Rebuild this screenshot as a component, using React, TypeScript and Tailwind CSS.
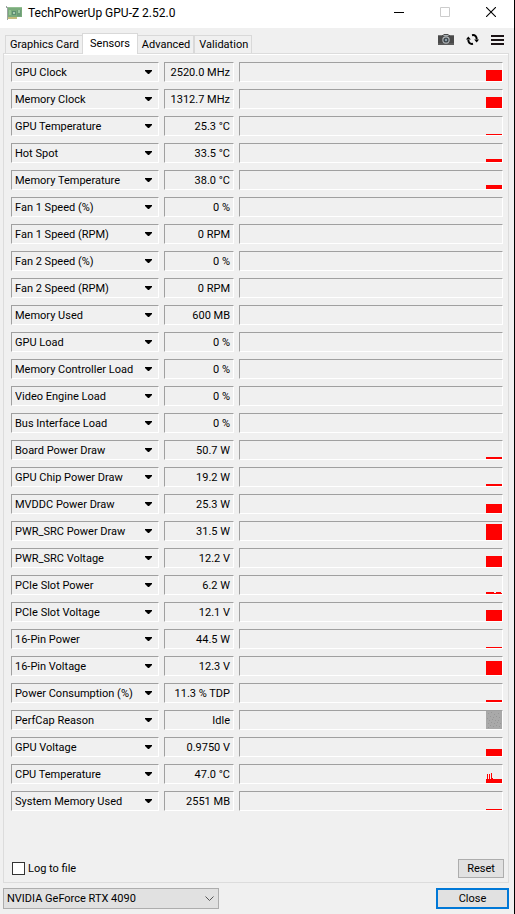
import { useState } from 'react';
import clsx from 'clsx';

type Sensor = {
  name: string;
  value: string;
  /** Height of the recorded bar in pixels, 0 when nothing was recorded */
  level?: number;
  kind?: 'bar' | 'slot' | 'spikes' | 'perfcap';
};

const SENSORS: Sensor[] = [
  { name: 'GPU Clock', value: '2520.0 MHz', level: 11 },
  { name: 'Memory Clock', value: '1312.7 MHz', level: 11 },
  { name: 'GPU Temperature', value: '25.3 °C', level: 1 },
  { name: 'Hot Spot', value: '33.5 °C', level: 3 },
  { name: 'Memory Temperature', value: '38.0 °C', level: 4 },
  { name: 'Fan 1 Speed (%)', value: '0 %' },
  { name: 'Fan 1 Speed (RPM)', value: '0 RPM' },
  { name: 'Fan 2 Speed (%)', value: '0 %' },
  { name: 'Fan 2 Speed (RPM)', value: '0 RPM' },
  { name: 'Memory Used', value: '600 MB' },
  { name: 'GPU Load', value: '0 %' },
  { name: 'Memory Controller Load', value: '0 %' },
  { name: 'Video Engine Load', value: '0 %' },
  { name: 'Bus Interface Load', value: '0 %' },
  { name: 'Board Power Draw', value: '50.7 W', level: 2 },
  { name: 'GPU Chip Power Draw', value: '19.2 W', level: 2 },
  { name: 'MVDDC Power Draw', value: '25.3 W', level: 9 },
  { name: 'PWR_SRC Power Draw', value: '31.5 W', level: 16 },
  { name: 'PWR_SRC Voltage', value: '12.2 V', level: 11 },
  { name: 'PCIe Slot Power', value: '6.2 W', level: 1, kind: 'slot' },
  { name: 'PCIe Slot Voltage', value: '12.1 V', level: 11 },
  { name: '16-Pin Power', value: '44.5 W', level: 1 },
  { name: '16-Pin Voltage', value: '12.3 V', level: 14 },
  { name: 'Power Consumption (%)', value: '11.3 % TDP', level: 2 },
  { name: 'PerfCap Reason', value: 'Idle', level: 18, kind: 'perfcap' },
  { name: 'GPU Voltage', value: '0.9750 V', level: 7 },
  { name: 'CPU Temperature', value: '47.0 °C', level: 4, kind: 'spikes' },
  { name: 'System Memory Used', value: '2551 MB', level: 1 },
];

const TABS = ['Graphics Card', 'Sensors', 'Advanced', 'Validation'];

const SUNKEN = 'h-5 border border-t-[#a0a0a0] border-l-[#a0a0a0] border-r-white border-b-white';

function CardIcon() {
  return (
    <svg width="16" height="15" viewBox="0 0 16 15" aria-hidden="true">
      <path d="M0 0h1v1h1v13H1V2H0z" fill="#9aa3a0" />
      <path d="M2 1h14v10H2z" fill="#7aab7c" />
      <path d="M2 1h14v1H2z" fill="#93bf92" />
      <path d="M2 11h9v2H2z" fill="#c3bd7c" />
      <path d="M3 4h2v5H3z" fill="#93c292" />
      <path d="M6 5h4v4H6z" fill="#5e8f73" />
      <path d="M7 6h2v2H7z" fill="#a9cbb0" />
      <path d="M11 4h4v6h-4z" fill="#6c9c78" />
      <path d="M12 4h2v3h-2z" fill="#9cc7a0" />
    </svg>
  );
}

function CameraIcon() {
  return (
    <svg width="16" height="11" viewBox="0 0 16 11" aria-hidden="true">
      <path d="M0 1h5l1-1h4l1 1h5v10H0z" fill="#4a4a4a" />
      <path d="M0 1h4v1H0zM12 1h4v1h-4z" fill="#777" />
      <path d="M5.5 1h5v1h-5z" fill="#a8b0b4" />
      <path d="M0 9h16v2H0z" fill="#5a5a5a" />
      <circle cx="8" cy="6" r="3.7" fill="#b4b9bc" />
      <circle cx="8" cy="6" r="2.6" fill="#3c444a" />
      <circle cx="8" cy="6" r="1.2" fill="#8fa0aa" />
    </svg>
  );
}

function RefreshIcon() {
  return (
    <svg width="13" height="11" viewBox="0 0 13 11" aria-hidden="true">
      <path d="M6 1.2C9 .6 10.8 2.4 10.7 5.4" fill="none" stroke="#000" strokeWidth="2" />
      <path d="M8.2 5.4H13L10.7 8.6z" />
      <path d="M7 9.8C4 10.4 2.2 8.6 2.3 5.6" fill="none" stroke="#000" strokeWidth="2" />
      <path d="M0 5.6h4.8L2.3 2.4z" />
    </svg>
  );
}

function History({ level = 0, kind = 'bar' }: Pick<Sensor, 'level' | 'kind'>) {
  if (!level) return null;
  return (
    <svg width="16" height="18" viewBox="0 0 16 18" shapeRendering="crispEdges" aria-hidden="true">
      <rect y={18 - level} width="16" height={level} fill={kind === 'perfcap' ? '#a9a9a9' : '#f00'} />
      {kind === 'slot' && <path d="M0 16h8v1H0zM10 16h5v1h-5z" fill="#f00" />}
      {kind === 'spikes' && <path d="M1 9h1v5H1zM3 9h1v5H3zM5 8h1v5h1v1H5z" fill="#f00" />}
      {kind === 'perfcap' && (
        <path
          d="M2 2h1v1H2zM5 1h1v1H5zM8 3h1v1H8zM12 2h1v1h-1zM4 5h1v1H4zM7 6h1v1H7zM10 5h1v1h-1zM13 6h1v1h-1zM1 7h1v1H1zM3 9h1v1H3zM6 8h1v1H6zM9 9h1v1H9zM12 9h1v1h-1zM2 12h1v1H2zM5 11h1v1H5zM8 12h1v1H8zM11 11h1v1h-1zM14 12h1v1h-1zM4 14h1v1H4zM7 15h1v1H7zM10 14h1v1h-1zM13 15h1v1h-1zM2 16h1v1H2z"
          fill="#979797"
        />
      )}
    </svg>
  );
}

function SensorRow({ name, value, level, kind }: Sensor) {
  return (
    <div className="flex gap-[5px]">
      <div className={clsx(SUNKEN, 'grid w-[148px] items-center')}>
        <select aria-label={name} className="col-start-1 row-start-1 h-full w-full appearance-none pt-px pl-[3px] outline-none">
          <option>{name}</option>
        </select>
        <svg width="7" height="4" viewBox="0 0 7 4" className="pointer-events-none col-start-1 row-start-1 mr-1.5 justify-self-end" aria-hidden="true">
          <path d="M0 0h7v1L4 4H3L0 1z" />
        </svg>
      </div>
      <output className={clsx(SUNKEN, 'flex w-[70px] items-center justify-end pt-px pr-[3px] whitespace-nowrap')}>{value}</output>
      <div className={clsx(SUNKEN, 'flex flex-1 justify-end')}>
        <History level={level} kind={kind} />
      </div>
    </div>
  );
}

export default function App() {
  const [tab, setTab] = useState('Sensors');
  const [logging, setLogging] = useState(false);

  return (
    <div className="border-r border-black bg-[#f0f0f0] font-[Roboto,Arial,sans-serif] text-[11px] leading-4 text-black">
      <header className="flex h-7 items-start bg-white pl-1.5">
        <div className="flex flex-1 items-center gap-1.5 pt-[5px]">
          <CardIcon />
          <h1 className="text-xs">TechPowerUp GPU-Z 2.52.0</h1>
        </div>
        <div className="flex h-6">
          <button aria-label="Minimize" className="grid w-[46px] place-items-center">
            <svg width="10" height="10" viewBox="0 0 10 10"><path d="M0 5h10v1H0z" /></svg>
          </button>
          <button aria-label="Maximize" disabled className="grid w-[46px] place-items-center">
            <svg width="10" height="10" viewBox="0 0 10 10"><path d="M.5.5h9v9h-9z" fill="none" stroke="#ccc" /></svg>
          </button>
          <button aria-label="Close window" className="grid w-[46px] place-items-center">
            <svg width="10" height="10" viewBox="0 0 10 10"><path d="M0 0l10 10M10 0L0 10" fill="none" stroke="#000" strokeWidth="1.1" /></svg>
          </button>
        </div>
      </header>

      <div className="flex h-[25px] items-end justify-between pr-2.5 pl-[5px]">
        <div role="tablist" className="flex items-end">
          {TABS.map((t) => (
            <button
              key={t}
              role="tab"
              aria-selected={t === tab}
              onClick={() => setTab(t)}
              className={clsx(
                'border border-b-0 border-[#d9d9d9] whitespace-nowrap',
                t === tab ? 'relative -mx-px -mb-px h-[21px] bg-white px-[7px]' : 'h-[18px] pt-px pr-[3px] pl-1',
              )}
            >
              {t}
            </button>
          ))}
        </div>
        <div className="flex items-center gap-3 self-start pt-1.5">
          <button aria-label="Take screenshot"><CameraIcon /></button>
          <button aria-label="Refresh"><RefreshIcon /></button>
          <button aria-label="Menu">
            <svg width="13" height="10" viewBox="0 0 13 10"><path d="M0 0h13v2H0zM0 4h13v2H0zM0 8h13v2H0z" fill="#1a1214" /></svg>
          </button>
        </div>
      </div>

      <main className="mr-[5px] ml-[3px] border border-[#dcdcdc]">
        <div className="flex flex-col gap-[7px] border-t border-white pt-[7px] pr-[5px] pl-[7px]">
          {SENSORS.map((s) => (
            <SensorRow key={s.name} {...s} />
          ))}
        </div>
        <div className="mt-12 flex items-center justify-between pr-1 pb-1 pl-2">
          <label className="flex items-center gap-[3px]">
            <input
              type="checkbox"
              checked={logging}
              onChange={(e) => setLogging(e.target.checked)}
              className="size-[13px] appearance-none border border-[#333] bg-white checked:bg-[#333]"
            />
            Log to file
          </label>
          <button className="h-[19px] w-[46px] border border-[#adadad] bg-[#e1e1e1] pt-px">Reset</button>
        </div>
      </main>

      <footer className="flex justify-between pt-[5px] pr-[5px] pb-[5px] pl-[3px]">
        <div className="grid w-[216px] items-center border border-[#adadad] bg-[#e1e1e1]">
          <select aria-label="Graphics card" className="col-start-1 row-start-1 w-full appearance-none pt-px pl-[3px] outline-none">
            <option>NVIDIA GeForce RTX 4090</option>
          </select>
          <svg width="9" height="5" viewBox="0 0 9 5" className="pointer-events-none col-start-1 row-start-1 mr-1 justify-self-end" aria-hidden="true">
            <path d="M.5.5l4 4 4-4" fill="none" stroke="#555" />
          </svg>
        </div>
        <button className="h-[21px] w-[73px] border-2 border-[#0078d7] bg-[#e1e1e1] pt-px">Close</button>
      </footer>
    </div>
  );
}
